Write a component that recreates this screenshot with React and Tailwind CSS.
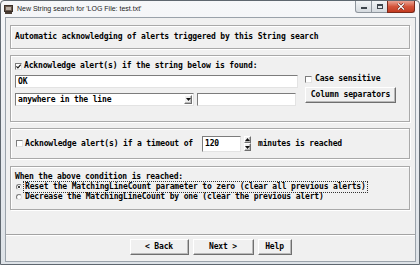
import React from 'react';

const mono = "font-['DejaVu_Sans_Mono',monospace] font-bold text-[8px] tracking-[-0.15px] leading-[10px] text-black whitespace-nowrap";
const panel = "border border-[#a9a9a9] shadow-[inset_1px_1px_0_#ffffff,1px_1px_0_#ffffff]";
const sunken = "bg-white border border-t-[#7c7c7c] border-l-[#7c7c7c] border-b-[#e3e3e3] border-r-[#e3e3e3]";
const raised = "bg-[#f0f0f0] border border-t-white border-l-white border-b-[#6f6f6f] border-r-[#6f6f6f] shadow-[inset_-1px_-1px_0_#b9b9b9]";

const Check = ({ checked }) => (
  <span className={`w-[7px] h-[7px] shrink-0 flex items-center justify-center ${sunken}`}>
    {checked && (
      <svg width="5" height="5" viewBox="0 0 5 5">
        <path d="M0.4 2.3 L1.9 3.9 L4.7 0.7" stroke="#1a1a1a" strokeWidth="1.1" fill="none" />
      </svg>
    )}
  </span>
);

const Radio = ({ checked }) => (
  <span className="w-[6px] h-[6px] shrink-0 rounded-full bg-white border border-t-[#7c7c7c] border-l-[#7c7c7c] border-b-[#dedede] border-r-[#dedede] flex items-center justify-center">
    {checked && <span className="w-[2px] h-[2px] rounded-full bg-black" />}
  </span>
);

const Tri = ({ up }) => (
  <svg width="5" height="3" viewBox="0 0 5 3">
    <path d={up ? 'M0 3 L2.5 0 L5 3 Z' : 'M0 0 L5 0 L2.5 3 Z'} fill="#111" />
  </svg>
);

const AppIcon = () => (
  <svg width="9" height="9" viewBox="0 0 9 9">
    <rect x="0.5" y="0.5" width="8" height="6" fill="#6b5a4e" stroke="#3b3029" />
    <rect x="2" y="2" width="5" height="3" fill="#b9aea4" />
    <rect x="1" y="7" width="7" height="2" fill="#4a3d34" />
  </svg>
);

const Btn = ({ w, children }) => (
  <div className={`h-[16px] flex items-center justify-center ${raised} ${mono}`} style={{ width: w }}>
    {children}
  </div>
);

export default function App() {
  return (
    <div className="w-[420px] h-[265px] bg-white">
      <div className="w-[420px] h-[265px] flex flex-col border border-[#5f676f] rounded-t-[4px] bg-gradient-to-b from-[#f6f7f9] via-[#e9ecf0] to-[#dde2e7]">
        {/* title bar */}
        <div className="h-[16px] shrink-0 flex items-start">
          <div className="h-[16px] flex items-center pl-[3px]">
            <AppIcon />
            <span className="ml-[4px] font-['Liberation_Sans',sans-serif] text-[7px] leading-[8px] text-[#1d1d1d] whitespace-nowrap">
              New String search for 'LOG File: test.txt'
            </span>
          </div>
          <div className="ml-auto mr-[4px] flex h-[12px]">
            <div className="w-[17px] h-[12px] border border-[#8e959d] border-t-0 rounded-bl-[3px] bg-gradient-to-b from-[#f2f4f6] to-[#d5dadf] flex items-end justify-center pb-[3px]">
              <span className="w-[6px] h-[2px] bg-[#3e454c]" />
            </div>
            <div className="w-[15px] h-[12px] border-b border-[#8e959d] bg-gradient-to-b from-[#f2f4f6] to-[#d5dadf] flex items-center justify-center">
              <span className="w-[6px] h-[5px] border border-t-2 border-[#3e454c]" />
            </div>
            <div className="w-[28px] h-[12px] border border-[#7a2a1c] border-t-0 rounded-br-[3px] bg-gradient-to-b from-[#e9a394] via-[#d4553b] to-[#c2391f] flex items-center justify-center">
              <svg width="8" height="7" viewBox="0 0 8 7">
                <path d="M1 0.5 L7 6.5 M7 0.5 L1 6.5" stroke="#5a1a10" strokeWidth="2.4" />
                <path d="M1 0.5 L7 6.5 M7 0.5 L1 6.5" stroke="#ffffff" strokeWidth="1.3" />
              </svg>
            </div>
          </div>
        </div>

        {/* client area */}
        <div className="flex-1 ml-[4px] mr-[3px] mb-[2px] border border-[#9aa2aa] bg-[#f0f0f0] flex flex-col">
          <div className="h-[216px] shrink-0 pt-[7px] pl-[4px] pr-[5px] flex flex-col">
            {/* header panel */}
            <div className={`h-[24px] pl-[4px] flex items-center ${panel}`}>
              <span className={mono}>Automatic acknowledging of alerts triggered by this String search</span>
            </div>

            {/* string panel */}
            <div className={`mt-[6px] h-[67px] pl-[4px] pt-[5px] ${panel}`}>
              <div className="h-[10px] flex items-center gap-[2px]">
                <Check checked />
                <span className={mono}>Acknowledge alert(s) if the string below is found:</span>
              </div>
              <div className="flex mt-[3px]">
                <div className="flex flex-col pt-[1px] gap-[5px]">
                  <div className={`w-[283px] h-[13px] flex items-center pl-[2px] ${sunken}`}>
                    <span className={mono}>OK</span>
                  </div>
                  <div className="flex gap-[3px]">
                    <div className={`w-[179px] h-[13px] flex items-center pl-[2px] ${sunken}`}>
                      <span className={mono}>anywhere in the line</span>
                      <div className={`ml-auto mr-[1px] w-[8px] h-[9px] flex items-center justify-center ${raised}`}>
                        <Tri />
                      </div>
                    </div>
                    <div className={`w-[99px] h-[13px] ${sunken}`} />
                  </div>
                </div>
                <div className="ml-[7px] flex flex-col">
                  <div className="h-[10px] flex items-center gap-[3px]">
                    <Check />
                    <span className={mono}>Case sensitive</span>
                  </div>
                  <div className="mt-[3px]">
                    <Btn w={91}>Column separators</Btn>
                  </div>
                </div>
              </div>
            </div>

            {/* timeout panel */}
            <div className={`mt-[6px] h-[31px] pl-[5px] flex items-center ${panel}`}>
              <Check />
              <span className={`ml-[2px] ${mono}`}>Acknowledge alert(s) if a timeout of</span>
              <div className={`ml-[9px] w-[39px] h-[16px] flex items-center pl-[2px] ${sunken}`}>
                <span className={mono}>120</span>
              </div>
              <div className="ml-[3px] w-[7px] h-[15px] flex flex-col">
                <div className={`h-[7px] flex items-center justify-center ${raised}`}>
                  <Tri up />
                </div>
                <div className={`h-[8px] flex items-center justify-center ${raised}`}>
                  <Tri />
                </div>
              </div>
              <span className={`ml-[7px] ${mono}`}>minutes is reached</span>
            </div>

            {/* condition panel */}
            <div className={`mt-[7px] h-[44px] pl-[4px] pt-[5px] ${panel}`}>
              <div className="h-[9px] flex items-center">
                <span className={mono}>When the above condition is reached:</span>
              </div>
              <div className="h-[11px] flex items-center pl-[1px] gap-[2px]">
                <Radio checked />
                <span className={`${mono} leading-[8px] px-[1px] outline outline-1 outline-dotted outline-[#333]`}>
                  Reset the MatchingLineCount parameter to zero (clear all previous alerts)
                </span>
              </div>
              <div className="h-[10px] flex items-center pl-[1px] gap-[3px]">
                <Radio />
                <span className={mono}>Decrease the MatchingLineCount by one (clear the previous alert)</span>
              </div>
            </div>
          </div>

          <div className="h-[2px] shrink-0 border-t border-t-[#a3a3a3] border-b border-b-white" />

          {/* buttons */}
          <div className="flex-1 flex justify-center gap-[4px] pt-[3px]">
            <Btn w={59}>&lt; Back</Btn>
            <Btn w={61}>Next &gt;</Btn>
            <Btn w={34}>Help</Btn>
          </div>
        </div>
      </div>
    </div>
  );
}
